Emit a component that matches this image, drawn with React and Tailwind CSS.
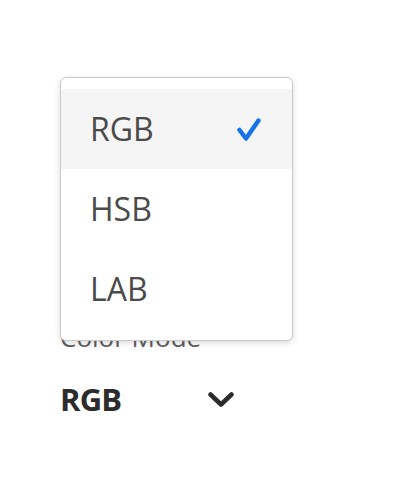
import React from 'react';

const items = ['RGB', 'HSB', 'LAB'];

const Check = () => (
  <svg width="24" height="23" viewBox="0 0 24 23" fill="none">
    <polyline
      points="2.5,12 9,20.5 21.5,2.5"
      stroke="#1473e6"
      strokeWidth="4.5"
      strokeLinecap="round"
      strokeLinejoin="round"
    />
  </svg>
);

const Chevron = () => (
  <svg width="26" height="15" viewBox="0 0 26 15" fill="none">
    <polyline
      points="2.5,2.5 13,12.5 23.5,2.5"
      stroke="#2c2c2c"
      strokeWidth="4.5"
      strokeLinecap="round"
      strokeLinejoin="round"
    />
  </svg>
);

export default function App() {
  const selected = 'RGB';

  return (
    <div className="relative w-[416px] h-[484px] bg-white font-['Open_Sans',sans-serif] overflow-hidden">
      <div className="pl-[60px] pt-[321px]">
        <div className="text-[26px] leading-[32px] text-[#5e5e5e]">Color Mode</div>
        <div className="mt-[14px] w-[174px] h-[64px] flex items-center justify-between">
          <span className="text-[31px] font-bold tracking-[-0.8px] text-[#2c2c2c] leading-[64px]">RGB</span>
          <Chevron />
        </div>
      </div>

      {/* popover menu */}
      <div className="absolute left-[60px] top-[77px] w-[233px] py-[11px] bg-white border border-[#cacaca] rounded-[6px] shadow-[0_2px_6px_rgba(0,0,0,0.15)]">
        {items.map(item => (
          <div
            key={item}
            className={`h-[80px] flex items-center justify-between pl-[29px] pr-[31px] ${item === selected ? 'bg-[#f5f5f5]' : ''}`}
          >
            <span className="text-[32px] leading-[80px] text-[#4b4b4b]">{item}</span>
            {item === selected && <Check />}
          </div>
        ))}
      </div>
    </div>
  );
}
